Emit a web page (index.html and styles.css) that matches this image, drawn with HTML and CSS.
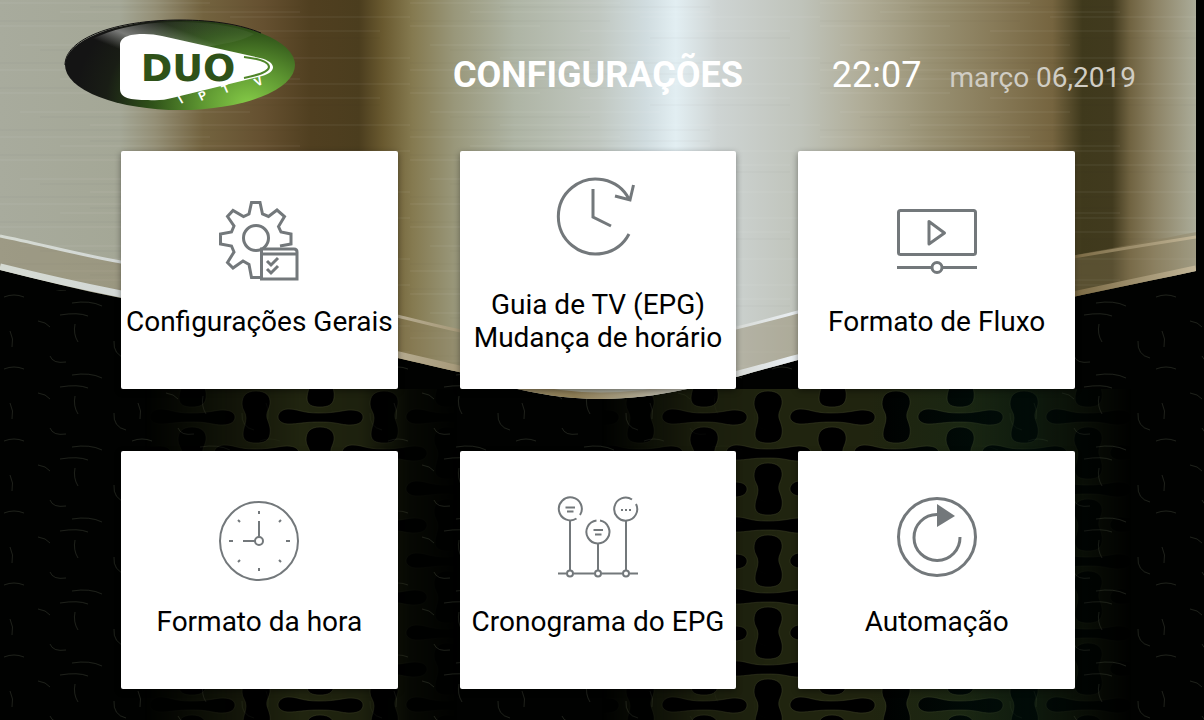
FILE: index.html
```html
<!DOCTYPE html>
<html lang="pt">
<head>
<meta charset="utf-8">
<title>Configurações</title>
<link rel="stylesheet" href="styles.css">
</head>
<body>

<!-- wallpaper: brushed metal shield over a woven grille -->
<svg class="wallpaper" viewBox="0 0 1204 720" preserveAspectRatio="none" aria-hidden="true">
	<defs>
		<linearGradient id="metal" gradientUnits="userSpaceOnUse" x1="0" y1="0" x2="1196" y2="0">
			<stop offset="0" stop-color="#a8ab9d"/>
			<stop offset=".1" stop-color="#a4a796"/>
			<stop offset=".13" stop-color="#948f76"/>
			<stop offset=".17" stop-color="#73633f"/>
			<stop offset=".22" stop-color="#655030"/>
			<stop offset=".26" stop-color="#503f20"/>
			<stop offset=".3" stop-color="#4b3d1e"/>
			<stop offset=".32" stop-color="#69592f"/>
			<stop offset=".345" stop-color="#857a50"/>
			<stop offset=".38" stop-color="#99977a"/>
			<stop offset=".43" stop-color="#aeb4a4"/>
			<stop offset=".5" stop-color="#c0c7c0"/>
			<stop offset=".54" stop-color="#d0dcdf"/>
			<stop offset=".565" stop-color="#e2eef2"/>
			<stop offset=".6" stop-color="#ced4d3"/>
			<stop offset=".67" stop-color="#bfc3ba"/>
			<stop offset=".72" stop-color="#b0ad98"/>
			<stop offset=".78" stop-color="#989072"/>
			<stop offset=".83" stop-color="#887b59"/>
			<stop offset=".88" stop-color="#75643f"/>
			<stop offset=".905" stop-color="#3f391c"/>
			<stop offset=".93" stop-color="#413a1e"/>
			<stop offset=".945" stop-color="#706341"/>
			<stop offset=".965" stop-color="#8c8264"/>
			<stop offset="1" stop-color="#abac99"/>
		</linearGradient>
		<linearGradient id="edge" gradientUnits="userSpaceOnUse" x1="0" y1="0" x2="1196" y2="0">
			<stop offset="0" stop-color="#d5dad2"/>
			<stop offset=".1" stop-color="#d3d8d6"/>
			<stop offset=".34" stop-color="#b3a88c"/>
			<stop offset=".48" stop-color="#8d7d55"/>
			<stop offset=".58" stop-color="#c9cac1"/>
			<stop offset=".66" stop-color="#e8edf0"/>
			<stop offset=".9" stop-color="#7c6b45"/>
			<stop offset="1" stop-color="#c2b698"/>
		</linearGradient>
		<pattern id="brush" width="410" height="67" patternUnits="userSpaceOnUse">
			<path d="M0 3H210M60 12H300M230 17H410M0 26H130M170 31H380M20 45H250M90 58H410" stroke="#fff" stroke-opacity=".08"/>
			<path d="M90 7H300M0 21H200M240 38H380M40 50H180M0 63H300" stroke="#000" stroke-opacity=".03"/>
		</pattern>
		<path id="tall" d="M0-26c10 0 15 5 14 13c-1 6-4 8-3 14c2 6 4 10 3 16c-1 7-6 9-14 9s-13-2-13-9c0-6 3-10 3-16c0-6-4-8-4-14c0-8 4-13 14-13z"/>
		<path id="wide" d="M-32-8c-6 0-10 4-10 8s5 7 10 7c12 0 14-2 32-2s20 3 30 3s13-4 13-8s-4-7-12-7s-14 3-32 3s-20-4-31-4z"/>
		<pattern id="grille" x="64" y="381" width="128" height="72" patternUnits="userSpaceOnUse">
			<rect width="128" height="72" fill="#20240f"/>
			<g fill="#000" stroke="#3b4024" stroke-opacity=".5">
				<use href="#tall" x="64" y="36"/>
				<use href="#tall"/>
				<use href="#tall" x="128"/>
				<use href="#tall" y="72"/>
				<use href="#tall" x="128" y="72"/>
				<use href="#wide" x="64"/>
				<use href="#wide" x="64" y="72"/>
				<use href="#wide" y="36"/>
				<use href="#wide" x="128" y="36"/>
			</g>
		</pattern>
		<!-- faint glints where the grille is in shadow -->
		<pattern id="glints" x="0" y="381" width="128" height="72" patternUnits="userSpaceOnUse">
			<path d="M10 22q4 8 2 16M75 15q-2 10 3 18M50 47q3 8 16 6M60 6q18-3 28 1M114 32q-1 14 12 17M4 60q10-4 20 0M72 66q18-3 30 3M38 12q8 1 12 6" fill="none" stroke="#48503e" stroke-opacity=".4"/>
		</pattern>
		<linearGradient id="fade" gradientUnits="userSpaceOnUse" x1="0" y1="0" x2="1204" y2="0">
			<stop offset=".12" stop-color="#fff" stop-opacity="0"/>
			<stop offset=".2" stop-color="#fff" stop-opacity=".6"/>
			<stop offset=".25" stop-color="#fff"/>
			<stop offset=".3" stop-color="#fff" stop-opacity=".9"/>
			<stop offset=".34" stop-color="#fff" stop-opacity=".2"/>
			<stop offset=".38" stop-color="#fff" stop-opacity="0"/>
			<stop offset=".5" stop-color="#fff" stop-opacity="0"/>
			<stop offset=".58" stop-color="#fff" stop-opacity=".8"/>
			<stop offset=".65" stop-color="#fff"/>
			<stop offset=".8" stop-color="#fff"/>
			<stop offset=".88" stop-color="#fff" stop-opacity=".5"/>
			<stop offset=".94" stop-color="#fff" stop-opacity="0"/>
		</linearGradient>
		<linearGradient id="tint" gradientUnits="userSpaceOnUse" x1="0" y1="0" x2="1204" y2="0">
			<stop offset=".72" stop-color="#03301f" stop-opacity="0"/>
			<stop offset=".86" stop-color="#03301f" stop-opacity=".35"/>
			<stop offset=".95" stop-color="#03301f" stop-opacity="0"/>
		</linearGradient>
		<mask id="lit"><rect width="1204" height="720" fill="url(#fade)"/></mask>
		<clipPath id="shield"><path d="M0 0H1196V271C1060 300 900 332 798 360C730 378 670 399 601 399C540 399 490 382 459 372C397 358 250 322 121 298C80 290 40 280 0 270Z"/></clipPath>
	</defs>
	<rect width="1204" height="720" fill="#010201"/>
	<rect y="290" width="1204" height="430" fill="url(#glints)"/>
	<g mask="url(#lit)">
		<rect y="389" width="1204" height="331" fill="url(#grille)"/>
		<rect y="389" width="1204" height="331" fill="url(#tint)"/>
	</g>
	<g clip-path="url(#shield)">
		<rect width="1196" height="400" fill="url(#metal)"/>
		<rect width="1196" height="400" fill="url(#brush)"/>
		<path d="M0 236C40 244 80 255 121 262C250 288 350 306 397 316C430 324 500 344 600 350C680 344 730 330 798 312C900 286 1080 255 1196 232V290L798 400H459L0 290Z" fill="#8a7b58" fill-opacity=".35"/>
		<path d="M0 236C40 244 80 255 121 262C250 288 350 306 397 316C430 324 500 344 600 350C680 344 730 330 798 312C900 286 1080 255 1196 237" fill="none" stroke="url(#edge)" stroke-width="3"/>
		<path d="M1196 269C1060 298 900 330 798 358C730 376 670 396 601 396C540 396 490 379 459 369C397 355 250 319 121 294C80 286 40 277 0 267" fill="none" stroke="url(#edge)" stroke-width="7"/>
	</g>
</svg>

<header class="topbar">
	<svg class="logo" viewBox="-4 0 236 92" role="img" aria-label="DUO IPTV">
		<defs>
			<radialGradient id="oval" gradientUnits="userSpaceOnUse" cx="185" cy="86" r="175" gradientTransform="translate(0 20) scale(1 .77)">
				<stop offset="0" stop-color="#86cc48"/>
				<stop offset=".28" stop-color="#5c9430"/>
				<stop offset=".55" stop-color="#2f5219"/>
				<stop offset=".82" stop-color="#191d15"/>
				<stop offset="1" stop-color="#141414"/>
			</radialGradient>
			<linearGradient id="gloss" gradientUnits="userSpaceOnUse" x1="100" y1="4" x2="85" y2="42">
				<stop offset="0" stop-color="#fff" stop-opacity=".05"/>
				<stop offset=".6" stop-color="#fff" stop-opacity=".42"/>
				<stop offset="1" stop-color="#fff" stop-opacity="0"/>
			</linearGradient>
		</defs>
		<ellipse cx="116" cy="46" rx="115" ry="45" fill="url(#oval)"/>
		<path d="M5 42C14 18 64 3 112 3C148 3 174 8 190 15C168 28 130 26 100 38C62 46 30 46 5 42Z" fill="url(#gloss)"/>
		<path d="M1 46C1 20 50 1 116 1C150 1 178 6 197 14" fill="none" stroke="#111"/>
		<path d="M56 26C56 17 68 15 80 15Q90 15 98 17L196 39C213 43 213 53 198 57L108 79Q98 82 84 81C66 81 56 79 56 70Z" fill="#fff"/>
		<path d="M180 38C197 40 205 43 205 48S194 56 180 59" fill="none" stroke="#4f8529" stroke-width="2"/>
		<text class="logo-name" x="124" y="62">DUO</text>
		<g class="logo-small">
			<text transform="translate(117 85) rotate(-30)">I</text>
			<text transform="translate(137 82) rotate(-26)">P</text>
			<text transform="translate(160 75) rotate(-24)">T</text>
			<text transform="translate(193 68) rotate(-28)">V</text>
		</g>
	</svg>
	<h1>CONFIGURAÇÕES</h1>
	<div class="when">
		<time class="clock">22:07</time>
		<time class="date" datetime="2019-03-06">março 06,2019</time>
	</div>
</header>

<main class="cards">
	<button class="card" type="button">
		<svg class="icon" viewBox="0 0 80 80">
			<path d="M42 76.500H32.500L30 63.500L24 60L14 67L8.500 61.500L15 51L12.500 45L1.500 43V33L12.500 31L15 25L8.500 15.500L14 9.500L24.500 15.500L30 13L32.500 1.500H41L43.500 13L49.500 15.500L58 9L65.500 15.500L59.500 25.500L62 31L72 33V43L61 45"/>
			<circle cx="37" cy="37" r="12.500"/>
			<path d="M42.500 48H75Q78 48 78 51V78H42.500ZM42.500 53H78" fill="#fff"/>
			<path d="M48 60l4 4l7-7M48 68l4 4l7-7"/>
		</svg>
		<span>Configurações Gerais</span>
	</button>
	<button class="card" type="button">
		<svg class="icon" viewBox="0 7 80 80">
			<path d="M71 57A37.500 37.500 0 1 1 71 22M75.500 8L72 23L57 19M35 12V40L53 49"/>
		</svg>
		<span>Guia de TV (EPG)<br>Mudança de horário</span>
	</button>
	<button class="card" type="button">
		<svg class="icon" viewBox="0 0 80 80">
			<rect x="1.500" y="9.500" width="77" height="44" rx="2"/>
			<path d="M32 20.500V43L47.500 32ZM0 66.500H34M46 66.500H80" stroke-linejoin="round"/>
			<circle cx="40" cy="66.500" r="5"/>
		</svg>
		<span>Formato de Fluxo</span>
	</button>
	<button class="card" type="button">
		<svg class="icon thin" viewBox="0 0 80 80">
			<circle cx="40" cy="40" r="39"/>
			<circle cx="40" cy="40" r="4"/>
			<path d="M40 20V36M24 40H36M40 10v3M40 67v3M10 40h4M67 40h4M19 19l2 2M60 21l2-2M19 61l2-2M60 59l2 2"/>
		</svg>
		<span>Formato da hora</span>
	</button>
	<button class="card" type="button">
		<svg class="icon thin" viewBox="0 4 80 80">
			<path d="M18.500 21.500A11.500 11.500 0 1 1 22 18M38.500 23.500A11.500 11.500 0 1 0 42 23.600M78 7A11.500 11.500 0 1 1 74 2.500"/>
			<path d="M7.500 10.500H17M9 14.500H15.500M35.500 33H45M37 37.500H43.500M63 13h2M67 13h2M71 13h2M12 24V73M40 47V73M68 24V73M0 76.500H8.500M15.500 76.500H36.500M43.500 76.500H64.500M71.500 76.500H80"/>
			<circle cx="12" cy="76.500" r="3"/>
			<circle cx="40" cy="76.500" r="3"/>
			<circle cx="68" cy="76.500" r="3"/>
		</svg>
		<span>Cronograma do EPG</span>
	</button>
	<button class="card" type="button">
		<svg class="icon" viewBox="0 4 80 80">
			<circle cx="40" cy="40" r="38.500"/>
			<path d="M40 17.500A23 23 0 1 0 63 40"/>
			<path class="solid" d="M40 7L58 19L40 30Z"/>
		</svg>
		<span>Automação</span>
	</button>
</main>

</body>
</html>
```

FILE: styles.css
```css
*{
box-sizing:border-box;
}
body{
margin:0;
min-height:100vh;
background:#000;
font-family:Roboto, "Liberation Sans", sans-serif;
}
.wallpaper{
position:absolute;
z-index:-1;
top:0;
left:0;
width:100%;
height:100%;
}

/* top bar */
.topbar{
display:grid;
grid-template-columns:1fr auto 1fr;
align-items:center;
height:151px;
padding:0 68px 2px 60px;
color:#fff;
}
.logo{
width:236px;
height:92px;
margin-bottom:20px;
}
.logo-name{
fill:#2f5219;
font-family:"DejaVu Sans", sans-serif;
font-size:38px;
font-weight:bold;
text-anchor:middle;
}
.logo-small{
fill:#fff;
font-size:12px;
font-weight:bold;
}
h1{
margin:0;
font-size:36px;
line-height:48px;
}
.when{
display:flex;
justify-content:flex-end;
align-items:baseline;
gap:28px;
}
.clock{
font-size:36px;
}
.date{
color:#d0cdc4;
font-size:28px;
}

/* cards */
.cards{
display:grid;
grid-template-columns:repeat(3, 1fr);
gap:62px;
padding:0 129px 31px 121px;
}
.card{
display:flex;
flex-direction:column;
align-items:center;
justify-content:center;
gap:24px;
height:238px;
padding:0 0 2px;
border:0;
border-radius:2px;
background:#fff;
box-shadow:0 2px 6px rgba(0,0,0,.4);
color:#000;
font-family:inherit;
font-size:28px;
line-height:33px;
white-space:nowrap;
cursor:pointer;
}
.icon{
width:80px;
height:80px;
overflow:visible;
fill:none;
stroke:#73787b;
stroke-width:3;
}
.thin{
stroke-width:2;
}
.solid{
fill:#73787b;
stroke:none;
}
```
